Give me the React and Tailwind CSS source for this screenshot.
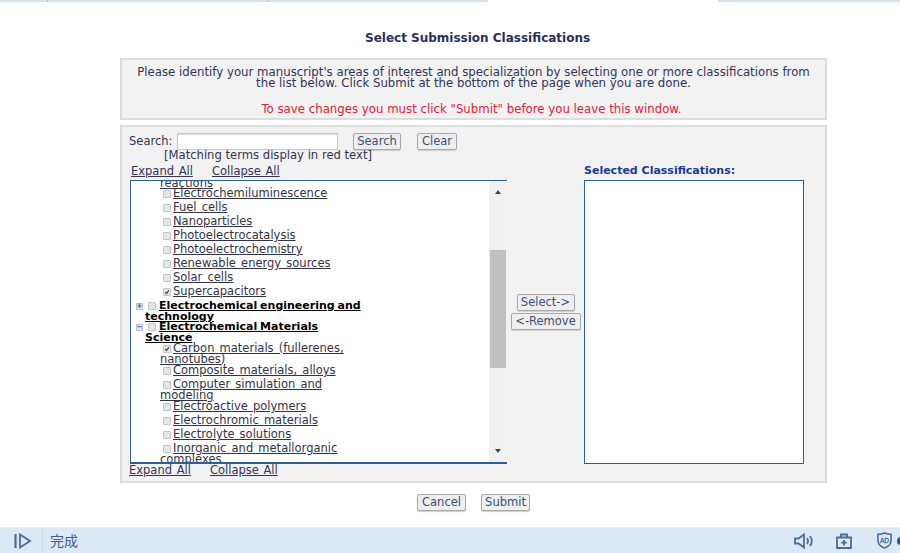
const Btn = ({ label, className = "" }) => (
  <button className={`h-[17px] border border-[#a9a9a9] rounded-[2px] bg-[#eeeeee] text-[11.5px] leading-[15px] text-[#3b5078] shadow-[0_1px_1px_#cccccc] ${className}`}>
    {label}
  </button>
);

const Check = ({ checked, className = "" }) => (
  <span className={`inline-flex items-center justify-center w-[8px] h-[8px] border border-[#c4c4c4] rounded-[1px] bg-[#e6e6e6] align-[-1px] ${className}`}>
    {checked && (
      <svg viewBox="0 0 8 8" className="w-[8px] h-[8px]">
        <path d="M1.5 4l2 2 3-4.500" fill="none" stroke="#444" strokeWidth="1.5" />
      </svg>
    )}
  </span>
);

const Leaf = ({ label, checked, h = "h-[14px]", pt = "pt-[2px]" }) => (
  <div className={`${h} ${pt} pl-[29px] leading-[11px]`}>
    <Check checked={checked} className="ml-[3px] mr-[2px]" />
    <a className="underline text-[#333344]">{label}</a>
  </div>
);

const Branch = ({ label, sign, h = "h-[21px]" }) => (
  <div className={`relative ${h} pt-[2px] pl-[14px] leading-[11px] text-[11px] [word-spacing:-1px] font-bold text-black`}>
    <span className="absolute left-[5px] top-[5px] w-[7px] h-[7px] border border-[#b7c4da] bg-[#dce5f2] flex items-center justify-center text-[7px] leading-none text-[#445]">
      {sign}
    </span>
    <Check className="ml-[3px] mr-[3px]" />
    <a className="underline">{label}</a>
  </div>
);

const Scrollbar = () => (
  <div className="w-[18px] bg-[#f1f1f1] flex flex-col items-center shrink-0">
    <div className="mt-[9px] w-0 h-0 border-x-[3.5px] border-x-transparent border-b-[4px] border-b-[#444]" />
    <div className="h-[56px]" />
    <div className="w-[16px] h-[118px] bg-[#c0c0c0]" />
    <div className="flex-1" />
    <div className="mb-[9px] w-0 h-0 border-x-[3.5px] border-x-transparent border-t-[4px] border-t-[#444]" />
  </div>
);

const Tree = () => (
  <div className="flex-1 overflow-hidden text-[11.5px] [word-spacing:1.5px]">
    <div className="w-[232px] -mt-[3px]">
      <div className="h-[8px] pl-[29px] leading-[11px]">
        <a className="underline text-[#333344]">reactions</a>
      </div>
      <Leaf label="Electrochemiluminescence" />
      <Leaf label="Fuel cells" />
      <Leaf label="Nanoparticles" />
      <Leaf label="Photoelectrocatalysis" />
      <Leaf label="Photoelectrochemistry" />
      <Leaf label="Renewable energy sources" />
      <Leaf label="Solar cells" />
      <Leaf label="Supercapacitors" checked />
      <Branch label="Electrochemical engineering and technology" sign="+" />
      <Branch label="Electrochemical Materials Science" sign="−" h="h-[22px]" />
      <Leaf label="Carbon materials (fullerenes, nanotubes)" checked h="h-[22px]" />
      <Leaf label="Composite materials, alloys" />
      <Leaf label="Computer simulation and modeling" h="h-[22px]" />
      <Leaf label="Electroactive polymers" />
      <Leaf label="Electrochromic materials" />
      <Leaf label="Electrolyte solutions" />
      <Leaf label="Inorganic and metallorganic complexes" h="h-[22px]" />
    </div>
  </div>
);

const StatusBar = () => (
  <div className="h-[26px] mt-auto bg-[#dbe8f5] border-t border-[#e8f0f8] flex items-center text-[#3f5f86] overflow-hidden">
    <svg viewBox="0 0 18 16" className="w-[18px] h-[16px] ml-[14px]" fill="none" stroke="#4a6d96" strokeWidth="1.8">
      <path d="M1.500 1v14" strokeWidth="2.200" />
      <path d="M6 1.500v13l10-6.500z" />
    </svg>
    <div className="ml-[10px] w-px h-full bg-[#c9d9ea]" />
    <span className="ml-[7px] text-[14px] font-['Noto_Sans_CJK_SC',sans-serif]">完成</span>
    <div className="ml-auto flex items-center">
      <svg viewBox="0 0 20 16" className="w-[20px] h-[16px]" fill="none" stroke="#4a6d96" strokeWidth="1.8">
        <path d="M1 5.500h3.500L10 1.500v13l-5.500-4H1z" />
        <path d="M13 5c1.200 1.800 1.200 4.200 0 6M16 3c2.200 3 2.200 7 0 10" />
      </svg>
      <svg viewBox="0 0 16 16" className="w-[16px] h-[16px] ml-[22px]" fill="none" stroke="#4a6d96" strokeWidth="1.8">
        <path d="M1 4.500h14V15H1zM5 4.500V1.500h6v3M8 7v5.500M5.200 9.700h5.600" />
      </svg>
      <svg viewBox="0 0 16 18" className="w-[15px] h-[17px] ml-[25px] mr-[-1px]" fill="none" stroke="#4a6d96" strokeWidth="1.700">
        <path d="M8 1c2 1 4 1.500 7 1.500V9c0 4-3 6.500-7 8-4-1.500-7-4-7-8V2.500C4 2.500 6 2 8 1z" />
        <text x="8" y="11.500" textAnchor="middle" fontSize="7" strokeWidth="0.3" fill="#4a6d96" fontFamily="Liberation Sans">AD</text>
      </svg>
      <div className="w-[8px] h-[8px] ml-[6px] -mr-[5px] rounded-full bg-[#33577f]" />
    </div>
  </div>
);

export default function App() {
  return (
    <div className="h-[553px] w-[900px] flex flex-col bg-white font-['DejaVu_Sans',Verdana,sans-serif] text-[11.5px] text-[#333355] overflow-hidden">
      {/* browser tabs cut off at the top */}
      <div className="h-[2px] flex shrink-0">
        <div className="w-[48px] bg-[#d5e2f0] border-r border-[#b9c9dc]" />
        <div className="w-[220px] bg-[#d5e2f0] border-r border-[#b9c9dc]" />
        <div className="w-[220px] bg-[#d5e2f0]" />
        <div className="w-[230px] bg-white" />
        <div className="flex-1 bg-[#d5e2f0]" />
      </div>

      <h1 className="mt-[29px] pl-[365px] h-[14px] text-[12px] leading-[14px] font-bold text-[#28305e]">
        Select Submission Classifications
      </h1>

      <div className="mt-[13px] ml-[120px] w-[707px] h-[62px] border-2 border-[#dddddd] bg-[#f2f2f2] pt-[7px] text-center text-[11.75px] leading-[11px]">
        <p>
          Please identify your manuscript's areas of interest and specialization by selecting one or more classifications from<br />
          the list below. Click Submit at the bottom of the page when you are done.
        </p>
        <p className="mt-[15px] pr-[4px] text-[#e0203a]">To save changes you must click "Submit" before you leave this window.</p>
      </div>

      <div className="mt-[5px] ml-[120px] w-[707px] h-[358px] border-2 border-[#dddddd] bg-[#f2f2f2] pl-[6px] flex flex-col">
        <div className="mt-[6px] flex items-start h-[17px]">
          <span className="ml-[1px] w-[44px] leading-[16px]">Search:</span>
          <input className="ml-[4px] w-[161px] h-[17px] bg-white border border-[#c8c8c8] shadow-[inset_0_1px_1px_#dddddd]" />
          <Btn label="Search" className="ml-[15px] w-[48px]" />
          <Btn label="Clear" className="ml-[16px] w-[40px]" />
        </div>
        <div className="pl-[36px] leading-[11px] text-[11.6px] h-[14px]">[Matching terms display in red text]</div>
        <div className="pl-[3px] h-[13px] leading-[13px] mt-[1px] flex gap-[19px] [word-spacing:1px]">
          <a className="underline">Expand All</a>
          <a className="underline">Collapse All</a>
        </div>

        <div className="flex h-[284px] ml-[2px] mt-[2px]">
          <div className="w-[377px] h-full border border-[#2f5f92] border-r-0 border-b-2 bg-white flex">
            <Tree />
            <Scrollbar />
          </div>
          <div className="w-[77px] flex flex-col items-center pt-[114px] gap-[2px]">
            <Btn label="Select->" className="w-[58px]" />
            <Btn label="<-Remove" className="w-[70px]" />
          </div>
          <div className="w-[220px] h-full border border-[#2f5f92] bg-white relative">
            <span className="absolute -left-px -top-[17px] text-[11px] leading-[14px] font-bold text-[#1c3a94] whitespace-nowrap">
              Selected Classifications:
            </span>
          </div>
        </div>

        <div className="pl-[1px] h-[13px] leading-[13px] flex gap-[19px] [word-spacing:1px]">
          <a className="underline">Expand All</a>
          <a className="underline">Collapse All</a>
        </div>
      </div>

      <div className="mt-[11px] pl-[417px] flex gap-[15px]">
        <Btn label="Cancel" className="w-[49px]" />
        <Btn label="Submit" className="w-[49px]" />
      </div>

      <StatusBar />
    </div>
  );
}
